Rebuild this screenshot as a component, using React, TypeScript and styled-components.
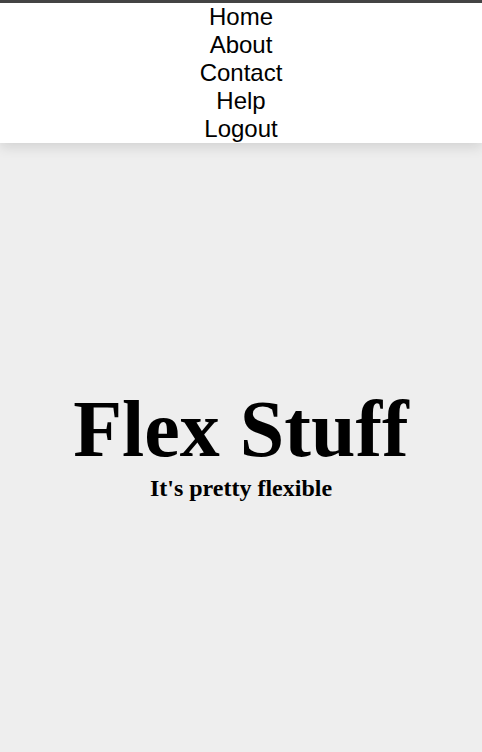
import React from 'react';
import styled, { createGlobalStyle } from 'styled-components';

const GlobalStyle = createGlobalStyle`
  html, body {
    margin: 0;
    padding: 0;
    background: #eee;
  }
  body {
    font-family: "Liberation Serif", "Times New Roman", serif;
  }
`;

const Page = styled.div`
  display: flex;
  flex-direction: column;
  min-height: 100vh;
`;

const Nav = styled.nav`
  display: flex;
  flex-direction: column;
  align-items: center;
  background: #fff;
  border-top: 3px solid #444;
  box-shadow: 0 4px 12px rgba(0, 0, 0, 0.12);
  position: relative;
  z-index: 1;
`;

const NavLink = styled.a`
  font-family: "Liberation Sans", Arial, sans-serif;
  font-size: 24px;
  line-height: 28px;
  color: #000;
  text-decoration: none;
`;

const Hero = styled.main`
  flex: 1;
  display: flex;
  flex-direction: column;
  align-items: center;
  justify-content: center;
  text-align: center;
  padding-bottom: 8px;
`;

const Title = styled.h1`
  margin: 0 0 2px;
  font-size: 80px;
  font-weight: 700;
  line-height: 1.1;
`;

const Subtitle = styled.h2`
  margin: 0;
  font-size: 24px;
  font-weight: 700;
`;

const links = ['Home', 'About', 'Contact', 'Help', 'Logout'];

export default function App() {
  return (
    <Page>
      <GlobalStyle />
      <Nav>
        {links.map((l) => (
          <NavLink key={l} href="#">
            {l}
          </NavLink>
        ))}
      </Nav>
      <Hero>
        <Title>Flex Stuff</Title>
        <Subtitle>It's pretty flexible</Subtitle>
      </Hero>
    </Page>
  );
}
